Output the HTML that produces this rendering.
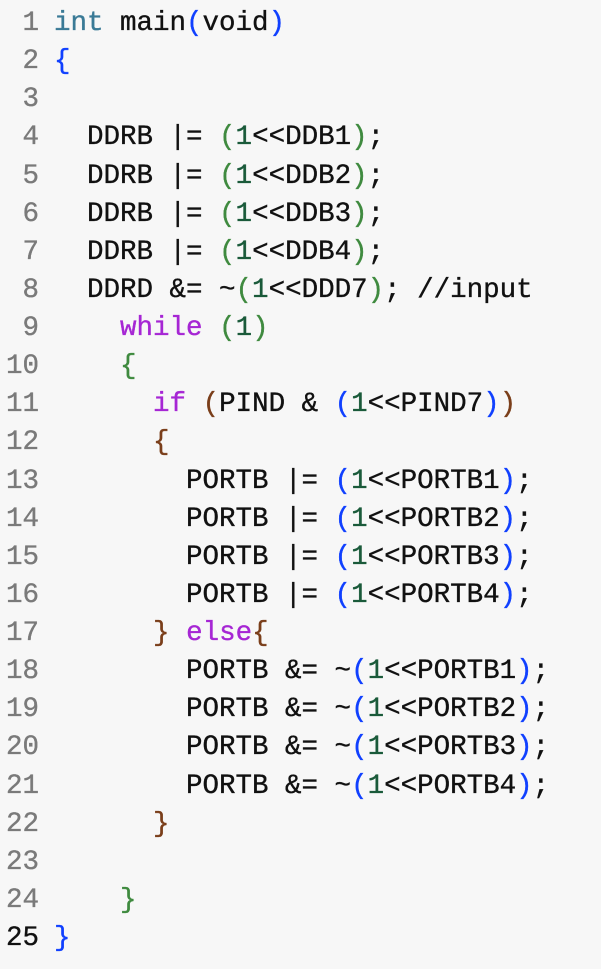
<!DOCTYPE html>
<html><head><meta charset="utf-8"><style>
html,body{margin:0;padding:0;background:#f7f7f7;width:601px;height:969px;overflow:hidden}
#c{position:absolute;top:5px;left:0;font-family:"Liberation Mono",monospace;font-size:27.5px;color:#111;-webkit-text-stroke:0.35px currentColor}
.l{height:38.13px;line-height:38.13px;white-space:pre;position:relative}
.n{position:absolute;left:0;width:39px;text-align:right;color:#7a7a7a}
.t{position:absolute;left:54px}
.k{color:#3a7a96}.p{color:#a626d4}.b{color:#1040ff}.g{color:#3f8a3f}.r{color:#7a3e1a}.d{color:#1a5a3a}
</style></head><body><div id="c">
<div class="l"><span class="n">1</span><span class="t"><span class="k">int</span> main<span class="b">(</span>void<span class="b">)</span></span></div>
<div class="l"><span class="n">2</span><span class="t"><span class="b">{</span></span></div>
<div class="l"><span class="n">3</span><span class="t"></span></div>
<div class="l"><span class="n">4</span><span class="t">  DDRB |= <span class="g">(</span><span class="d">1</span>&lt;&lt;DDB1<span class="g">)</span>;</span></div>
<div class="l"><span class="n">5</span><span class="t">  DDRB |= <span class="g">(</span><span class="d">1</span>&lt;&lt;DDB2<span class="g">)</span>;</span></div>
<div class="l"><span class="n">6</span><span class="t">  DDRB |= <span class="g">(</span><span class="d">1</span>&lt;&lt;DDB3<span class="g">)</span>;</span></div>
<div class="l"><span class="n">7</span><span class="t">  DDRB |= <span class="g">(</span><span class="d">1</span>&lt;&lt;DDB4<span class="g">)</span>;</span></div>
<div class="l"><span class="n">8</span><span class="t">  DDRD &amp;= ~<span class="g">(</span><span class="d">1</span>&lt;&lt;DDD7<span class="g">)</span>; //input</span></div>
<div class="l"><span class="n">9</span><span class="t">    <span class="p">while</span> <span class="g">(</span><span class="d">1</span><span class="g">)</span></span></div>
<div class="l"><span class="n">10</span><span class="t">    <span class="g">{</span></span></div>
<div class="l"><span class="n">11</span><span class="t">      <span class="p">if</span> <span class="r">(</span>PIND &amp; <span class="b">(</span><span class="d">1</span>&lt;&lt;PIND7<span class="b">)</span><span class="r">)</span></span></div>
<div class="l"><span class="n">12</span><span class="t">      <span class="r">{</span></span></div>
<div class="l"><span class="n">13</span><span class="t">        PORTB |= <span class="b">(</span><span class="d">1</span>&lt;&lt;PORTB1<span class="b">)</span>;</span></div>
<div class="l"><span class="n">14</span><span class="t">        PORTB |= <span class="b">(</span><span class="d">1</span>&lt;&lt;PORTB2<span class="b">)</span>;</span></div>
<div class="l"><span class="n">15</span><span class="t">        PORTB |= <span class="b">(</span><span class="d">1</span>&lt;&lt;PORTB3<span class="b">)</span>;</span></div>
<div class="l"><span class="n">16</span><span class="t">        PORTB |= <span class="b">(</span><span class="d">1</span>&lt;&lt;PORTB4<span class="b">)</span>;</span></div>
<div class="l"><span class="n">17</span><span class="t">      <span class="r">}</span> <span class="p">else</span><span class="r">{</span></span></div>
<div class="l"><span class="n">18</span><span class="t">        PORTB &amp;= ~<span class="b">(</span><span class="d">1</span>&lt;&lt;PORTB1<span class="b">)</span>;</span></div>
<div class="l"><span class="n">19</span><span class="t">        PORTB &amp;= ~<span class="b">(</span><span class="d">1</span>&lt;&lt;PORTB2<span class="b">)</span>;</span></div>
<div class="l"><span class="n">20</span><span class="t">        PORTB &amp;= ~<span class="b">(</span><span class="d">1</span>&lt;&lt;PORTB3<span class="b">)</span>;</span></div>
<div class="l"><span class="n">21</span><span class="t">        PORTB &amp;= ~<span class="b">(</span><span class="d">1</span>&lt;&lt;PORTB4<span class="b">)</span>;</span></div>
<div class="l"><span class="n">22</span><span class="t">      <span class="r">}</span></span></div>
<div class="l"><span class="n">23</span><span class="t"></span></div>
<div class="l"><span class="n">24</span><span class="t">    <span class="g">}</span></span></div>
<div class="l"><span class="n" style="color:#111">25</span><span class="t"><span class="b">}</span></span></div>
</div></body></html>
